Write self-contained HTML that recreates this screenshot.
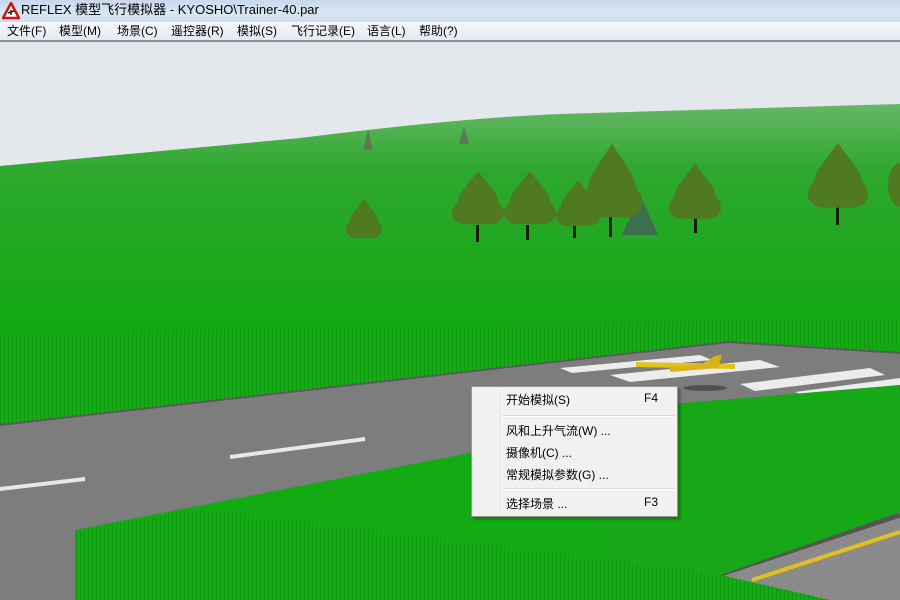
<!DOCTYPE html>
<html><head><meta charset="utf-8"><style>
body{margin:0;width:900px;height:600px;overflow:hidden;font-family:"Liberation Sans","Noto Sans CJK SC",sans-serif;position:relative;background:#e8eaec}
#title{position:absolute;left:0;top:0;width:900px;height:22px;background:linear-gradient(#c9d9ec,#dbe6f3 60%,#cfdcec);font-size:13px;line-height:20px}
#title span{position:absolute;left:21px;top:0;color:#000}
#menu{position:absolute;left:0;top:22px;width:900px;height:18px;background:linear-gradient(#f6f7fb,#e4e9f3);font-size:12px;line-height:18px;border-bottom:2px solid #8d8f93}
#menu span{position:absolute;top:0}
#scene{position:absolute;left:0;top:42px}
#ctx{position:absolute;left:471px;top:386px;width:205px;height:129px;background:#f1f1f1;border:1px solid #979797;box-shadow:2px 2px 3px rgba(0,0,0,.35);font-size:12px}
#ctx .g{position:absolute;left:28px;top:2px;bottom:2px;width:1px;background:#e0e0e0;border-right:1px solid #fff}
#ctx div.i{position:absolute;left:34px}
#ctx div.k{position:absolute;left:172px}
#ctx .sep{position:absolute;left:30px;right:2px;height:1px;background:#d8d8d8;border-bottom:1px solid #fff}
</style></head><body>
<div id="title"><svg width="18" height="18" style="position:absolute;left:2px;top:2px"><polygon points="9,1 17,16 1,16" fill="#fff" stroke="#d01010" stroke-width="2.5"/><path d="M6,11 L12,9 M9,8 L9,13" stroke="#222" stroke-width="1.5"/></svg><span>REFLEX 模型飞行模拟器 - KYOSHO\Trainer-40.par</span></div>
<div id="menu"><span style="left:7px">文件(F)</span><span style="left:59px">模型(M)</span><span style="left:117px">场景(C)</span><span style="left:171px">遥控器(R)</span><span style="left:237px">模拟(S)</span><span style="left:291px">飞行记录(E)</span><span style="left:367px">语言(L)</span><span style="left:419px">帮助(?)</span></div>
<svg id="scene" width="900" height="558" viewBox="0 42 900 558">
<defs>
<linearGradient id="sky" x1="0" y1="0" x2="0" y2="1"><stop offset="0" stop-color="#e2e7ec"/><stop offset="1" stop-color="#eceeee"/></linearGradient>
<linearGradient id="field" x1="0" y1="100" x2="0" y2="330" gradientUnits="userSpaceOnUse"><stop offset="0" stop-color="#6ab86a"/><stop offset="0.3" stop-color="#2ea82e"/><stop offset="1" stop-color="#12a812"/></linearGradient>
<pattern id="str" width="4" height="40" patternUnits="userSpaceOnUse"><rect width="4" height="40" fill="#14ac14"/><rect width="1" height="40" fill="#0e980e"/></pattern>
<g id="tr"><path d="M0,-32 L14,-12 L20,8 L12,14 L-12,14 L-20,8 L-14,-12Z"/><circle cx="-10" cy="4" r="10"/><circle cx="10" cy="4" r="10"/><circle cx="0" cy="-10" r="12"/></g>
</defs>
<rect x="0" y="42" width="900" height="558" fill="url(#sky)"/>
<path d="M0,166 L300,138 Q460,118 560,114 L900,104 L900,600 L0,600Z" fill="url(#field)"/>
<path d="M0,335 L900,320 L900,345 L0,425Z" fill="url(#str)"/>
<path d="M0,425 L729,342 L900,353 L900,385 L680,412 L75,530 L75,600 L0,600Z" fill="#7d7d7d"/>
<path d="M0,425 L729,342 L900,353" stroke="#5a5a5a" stroke-width="2" fill="none"/>
<path d="M230,455 L365,437 L365,441 L230,459Z M0,487 L85,477 L85,481 L0,491Z" fill="#e8e8e8"/>
<path d="M560,368 L700,355 L712,360 L572,373Z M610,375 L760,360 L780,367 L630,382Z M740,384 L870,368 L885,375 L755,391Z M795,392 L900,378 L900,385 L810,398Z" fill="#ececec"/>
<path d="M700,578 L900,512 L900,600 L720,600Z" fill="#8a8a8a"/>
<path d="M718,575 L900,515" stroke="#555" stroke-width="5"/>
<path d="M752,580 L900,532" stroke="#e0c020" stroke-width="4"/>
<path d="M75,530 L680,412 L900,385 L900,512 L720,575 L830,600 L75,600Z" fill="#13ab13"/>
<path d="M75,530 L200,510 L720,575 L830,600 L75,600Z" fill="url(#str)"/>
<path d="M600,410 L900,385 L900,512 L720,575 L600,560Z" fill="#16a816"/>
<g fill="#4f7a22">
<path d="M368,130 l5,20 h-10z" fill="#5e7a55"/><path d="M464,127 l5,17 h-10z" fill="#5e7a55"/>
<g transform="translate(364,226) scale(0.9,0.85)"><use href="#tr"/></g>
<rect x="476" y="225" width="3" height="17" fill="#1a1a0a"/><g transform="translate(478,208) scale(1.3,1.15)"><use href="#tr"/></g>
<rect x="526" y="225" width="3" height="15" fill="#1a1a0a"/><g transform="translate(530,208) scale(1.3,1.15)"><use href="#tr"/></g>
<rect x="573" y="225" width="3" height="13" fill="#1a1a0a"/><g transform="translate(578,212) scale(1.1,1)"><use href="#tr"/></g>
<path d="M640,195 l18,40 h-36z" fill="#3f6e4e"/>
<rect x="609" y="210" width="3" height="27" fill="#1a1a0a"/><g transform="translate(612,195) scale(1.5,1.6)"><use href="#tr"/></g>
<rect x="694" y="215" width="3" height="18" fill="#1a1a0a"/><g transform="translate(695,202) scale(1.3,1.2)"><use href="#tr"/></g>
<rect x="836" y="200" width="3" height="25" fill="#1a1a0a"/><g transform="translate(838,188) scale(1.5,1.4)"><use href="#tr"/></g>
<ellipse cx="900" cy="185" rx="12" ry="22"/>
</g>
<ellipse cx="705" cy="388" rx="22" ry="3" fill="#333" opacity=".6"/>
<path d="M636,362 L735,364 L735,369 L636,367Z" fill="#e1c21e"/>
<path d="M670,372 L718,368 L722,355 L715,356 L700,365 L670,366Z" fill="#d8b41a"/>
</svg>
<div id="ctx">
<div class="g"></div>
<div class="i" style="top:4px">开始模拟(S)</div><div class="k" style="top:4px">F4</div>
<div class="sep" style="top:28px"></div>
<div class="i" style="top:35px">风和上升气流(W) ...</div>
<div class="i" style="top:57px">摄像机(C) ...</div>
<div class="i" style="top:79px">常规模拟参数(G) ...</div>
<div class="sep" style="top:101px"></div>
<div class="i" style="top:108px">选择场景 ...</div><div class="k" style="top:108px">F3</div>
</div>
</body></html>
